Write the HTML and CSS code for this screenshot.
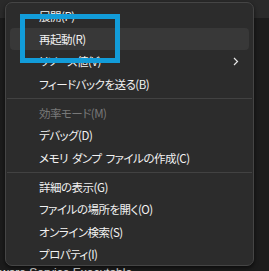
FILE: index.html
```html
<!DOCTYPE html>
<html lang="ja">

<head>
    <meta charset="UTF-8" />
    <title>コンテキスト メニュー</title>
    <link rel="stylesheet" href="styles.css">
</head>

<body>
    <div class="screen">
        <div class="backdrop">
            <div class="toolbar"></div>
            <div class="rows"></div>
            <div class="proc-name">Antimalware Service Executable</div>
        </div>

        <ul class="menu">
            <li class="item">展開(P)</li>
            <li class="item hover">再起動(R)</li>
            <li class="item sub">リソース値(V)
                <svg class="chevron" width="6" height="9" viewBox="0 0 6 9"><path d="M1 1l3.5 3.5L1 8" fill="none" stroke="#e6e6e6" stroke-width="1.2"/></svg>
            </li>
            <li class="item">フィードバックを送る(B)</li>
            <li class="sep"></li>
            <li class="item disabled">効率モード(M)</li>
            <li class="item">デバッグ(D)</li>
            <li class="item">メモリ ダンプ ファイルの作成(C)</li>
            <li class="sep"></li>
            <li class="item">詳細の表示(G)</li>
            <li class="item">ファイルの場所を開く(O)</li>
            <li class="item">オンライン検索(S)</li>
            <li class="item">プロパティ(I)</li>
        </ul>

        <!-- annotation box drawn over the screenshot -->
        <div class="callout"></div>
    </div>
</body>

</html>
```

FILE: styles.css
```css
html,
body {
    margin: 0;
    padding: 0;
    background: #1b1b1b;
}

.screen {
    position: relative;
    width: 269px;
    height: 271px;
    overflow: hidden;
    font-family: "Noto Sans CJK JP", "Noto Sans", sans-serif;
}

.backdrop {
    display: flex;
    flex-direction: column;
    height: 100%;
    background: #1c1c1c;
}

.toolbar {
    height: 18px;
    background: #2a2a2a;
    flex: none;
}

.rows {
    flex: 1;
}

.proc-name {
    height: 5px;
    overflow: hidden;
    margin-left: -40px;
    color: #e8e8e8;
    font-family: "Liberation Sans", sans-serif;
    font-size: 12px;
    line-height: 14px;
}

.menu {
    position: absolute;
    left: 5px;
    top: 2px;
    width: 249px;
    height: 264px;
    margin: 0;
    padding: 2px 4px;
    list-style: none;
    background: #2c2c2c;
    border: 1px solid #454545;
    border-radius: 7px;
    box-shadow: 0 2px 4px rgba(0, 0, 0, 0.6);
    box-sizing: border-box;
}

.item {
    position: relative;
    height: 22.5px;
    line-height: 22.5px;
    padding-left: 29px;
    color: #f2f2f2;
    font-size: 11.5px;
    letter-spacing: -0.5px;
    word-spacing: 2px;
    font-feature-settings: "palt";
    border-radius: 4px;
    white-space: nowrap;
}

.item.hover {
    background: #383838;
}

.item.disabled {
    color: #787878;
}

.chevron {
    position: absolute;
    right: 10px;
    top: 7px;
}

.sep {
    height: 1px;
    margin: 2.5px -3px 3px;
    background: #424242;
}

.callout {
    position: absolute;
    left: 20px;
    top: 14px;
    width: 100px;
    height: 49px;
    border: 5px solid #129cd9;
    box-sizing: border-box;
}
```
